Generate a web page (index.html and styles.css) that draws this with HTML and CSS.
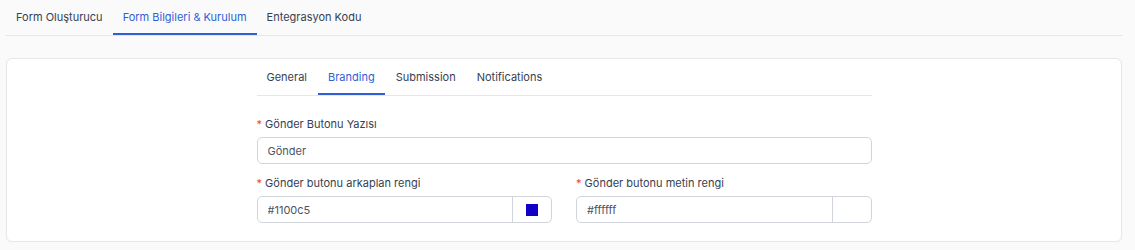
FILE: index.html
```html
<!DOCTYPE html>
<html lang="tr">
<head>
    <meta charset="UTF-8">
    <meta name="viewport" content="width=device-width, initial-scale=1.0">
    <title>Form Bilgileri & Kurulum</title>
    <link rel="stylesheet" href="styles.css">
</head>
<body>
    <div class="page">
        <nav class="top-tabs">
            <a class="top-tab">Form Oluşturucu</a>
            <a class="top-tab active">Form Bilgileri &amp; Kurulum</a>
            <a class="top-tab">Entegrasyon Kodu</a>
        </nav>

        <div class="card">
            <div class="card-inner">
                <nav class="sub-tabs">
                    <a class="sub-tab">General</a>
                    <a class="sub-tab active">Branding</a>
                    <a class="sub-tab">Submission</a>
                    <a class="sub-tab">Notifications</a>
                </nav>

                <form class="branding-form">
                    <div class="field">
                        <label for="submitText"><span class="req">*</span> Gönder Butonu Yazısı</label>
                        <input type="text" id="submitText" class="text-input" value="Gönder">
                    </div>

                    <div class="field-row">
                        <div class="field">
                            <label for="bgColor"><span class="req">*</span> Gönder butonu arkaplan rengi</label>
                            <div class="color-input">
                                <input type="text" id="bgColor" value="#1100c5">
                                <span class="swatch-cell"><span class="swatch" style="background: #1100c5;"></span></span>
                            </div>
                        </div>
                        <div class="field">
                            <label for="textColor"><span class="req">*</span> Gönder butonu metin rengi</label>
                            <div class="color-input">
                                <input type="text" id="textColor" value="#ffffff">
                                <span class="swatch-cell"><span class="swatch" style="background: #ffffff;"></span></span>
                            </div>
                        </div>
                    </div>
                </form>
            </div>
        </div>
    </div>
</body>
</html>
```

FILE: styles.css
```css
body {
    margin: 0;
    background-color: #fafafa;
    font-family: Inter, "Noto Sans", sans-serif;
    font-size: 11px;
    color: #374151;
}

.page {
    padding: 0 13px 0 6px;
}

.top-tabs,
.sub-tabs {
    display: flex;
    border-bottom: 1px solid #e5e7eb;
}

.top-tab,
.sub-tab {
    padding: 10px 10px 8px;
    line-height: 15px;
    border-bottom: 2px solid transparent;
    color: #374151;
    cursor: pointer;
}

.top-tab.active,
.sub-tab.active {
    color: #2f5fd6;
    border-bottom-color: #2f5fd6;
}

.card {
    margin-top: 22px;
    background: #fff;
    border: 1px solid #e5e7eb;
    border-radius: 6px;
    box-shadow: 0 1px 2px rgba(0, 0, 0, 0.04);
    padding: 1px 0 18px;
}

.card-inner {
    max-width: 615px;
    margin: 0 auto;
}

.sub-tab {
    margin-right: 1px;
}

.branding-form {
    padding-top: 21px;
}

.field {
    margin-bottom: 12px;
}

.field-row .field {
    margin-bottom: 0;
}

label {
    display: block;
    line-height: 15px;
    margin-bottom: 5px;
    color: #374151;
}

.req {
    color: #ef4444;
}

.text-input,
.color-input {
    box-sizing: border-box;
    width: 100%;
    height: 27px;
    border: 1px solid #d1d5db;
    border-radius: 5px;
    background: #fff;
}

.text-input {
    display: block;
    padding: 0 10px;
    font: inherit;
    color: #4b5563;
}

.field-row {
    display: grid;
    grid-template-columns: 1fr 1fr;
    gap: 24px;
}

.color-input {
    display: flex;
    overflow: hidden;
}

.color-input input {
    flex: 1;
    min-width: 0;
    border: none;
    padding: 0 10px;
    font: inherit;
    color: #4b5563;
    background: transparent;
}

.swatch-cell {
    width: 38px;
    border-left: 1px solid #d1d5db;
    display: flex;
    align-items: center;
    justify-content: center;
}

.swatch {
    width: 12px;
    height: 12px;
}
```
